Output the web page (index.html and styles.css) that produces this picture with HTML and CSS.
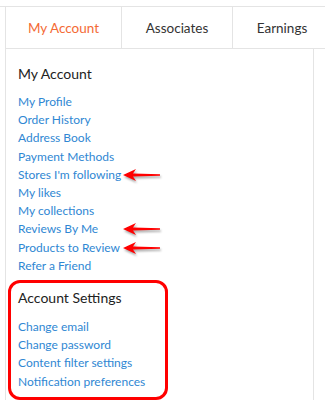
FILE: index.html
```html
<!DOCTYPE html>
<html lang="en">
  <head>
    <meta charset="UTF-8" />
    <title>My Account</title>
    <link rel="stylesheet" href="styles.css">
  </head>
  <body>
    <div class="page">
      <div class="account">
        <nav class="tabs">
          <a class="tab active" href="#">My Account</a>
          <a class="tab" href="#">Associates</a>
          <a class="tab" href="#">Earnings</a>
        </nav>

        <div class="content">
          <div class="menu-section">
            <h3>My Account</h3>
            <ul>
              <li><a href="#">My Profile</a></li>
              <li><a href="#">Order History</a></li>
              <li><a href="#">Address Book</a></li>
              <li><a href="#">Payment Methods</a></li>
              <li class="marked"><a href="#">Stores I'm following</a></li>
              <li><a href="#">My likes</a></li>
              <li><a href="#">My collections</a></li>
              <li class="marked"><a href="#">Reviews By Me</a></li>
              <li class="marked"><a href="#">Products to Review</a></li>
              <li><a href="#">Refer a Friend</a></li>
            </ul>
          </div>

          <div class="menu-section boxed">
            <h3>Account Settings</h3>
            <ul>
              <li><a href="#">Change email</a></li>
              <li><a href="#">Change password</a></li>
              <li><a href="#">Content filter settings</a></li>
              <li><a href="#">Notification preferences</a></li>
            </ul>
          </div>
        </div>
      </div>
    </div>

    <script>
      // Add the red annotation arrow to each marked row
      const arrow =
        '<svg class="arrow" width="40" height="16" viewBox="0 0 40 16">' +
        '<path d="M1 8 L14 2 L11 6.6 L38 7.2 L38 8.8 L11 9.4 L14 14 Z" fill="#f00"/></svg>';
      document.querySelectorAll(".marked").forEach((li) => {
        li.insertAdjacentHTML("beforeend", arrow);
      });
    </script>
  </body>
</html>
```

FILE: styles.css
```css
body {
  margin: 0;
  font-family: Lato, "Open Sans", sans-serif;
  color: #333;
  background: #fff;
  overflow: hidden;
}
.page {
  margin-top: 6px;
  border-top: 1px solid #e4e4e4;
  height: 393px;
}
.account {
  margin-left: 5px;
  border-left: 1px solid #e4e4e4;
  height: 100%;
  overflow: hidden;
}
.tabs {
  display: flex;
  width: 360px;
  height: 41px;
  border-bottom: 1px solid #e4e4e4;
}
.tab {
  flex: none;
  display: flex;
  align-items: center;
  justify-content: center;
  border-right: 1px solid #e4e4e4;
  font-size: 13.5px;
  color: #333;
  text-decoration: none;
}
.tab:nth-child(1) {
  width: 115px;
}
.tab:nth-child(2) {
  width: 110px;
}
.tab:nth-child(3) {
  width: 98px;
}
.tab.active {
  color: #f46a34;
}
.content {
  width: 308px;
  height: 100%;
  border-right: 1px solid #e4e4e4;
  padding: 16px 0 0 12px;
  box-sizing: border-box;
}
h3 {
  margin: 0 0 10px;
  font-size: 14px;
  font-weight: normal;
  line-height: 18px;
  color: #222;
}
.boxed h3 {
  margin-bottom: 11px;
}
ul {
  list-style: none;
  margin: 0;
  padding: 0;
}
li {
  position: relative;
  font-size: 12px;
  line-height: 18.2px;
}
li a {
  color: #2f87d3;
  text-decoration: none;
}
.arrow {
  position: absolute;
  left: 104px;
  top: 1px;
  filter: drop-shadow(1px 2px 1px rgba(0, 0, 0, 0.35));
}
.menu-section.boxed {
  width: 147px;
  margin: 5px 0 0 -10px;
  padding: 6px 0 6px 7px;
  border: 3px solid #f00;
  border-radius: 12px;
}
```
